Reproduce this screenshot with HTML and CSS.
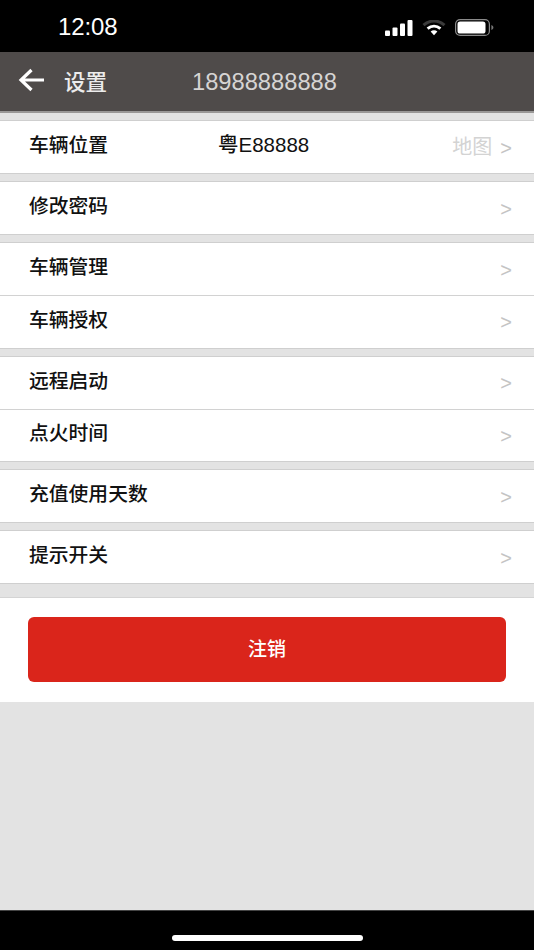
FILE: index.html
```html
<!DOCTYPE html>
<html lang="zh-CN">
<head>
<meta charset="utf-8">
<title>设置</title>
<link rel="stylesheet" href="styles.css">
</head>
<body>
<div class="screen">
  <div class="status">
    <span class="time">12:08</span>
    <div class="status-icons">
      <svg class="signal" width="28" height="16" viewBox="0 0 28 16"><rect x="0" y="10.500" width="5" height="5.500" rx="1"/><rect x="7.500" y="7.500" width="5" height="8.500" rx="1"/><rect x="15" y="3.500" width="5" height="12.500" rx="1"/><rect x="22.500" y="0" width="5" height="16" rx="1"/></svg>
      <svg class="wifi" width="24" height="16" viewBox="0 0 24 16"><path d="M1.500 5.200C7.600-.4 16.400-.4 22.500 5.200" fill="none" stroke="#3a3a3a" stroke-width="3"/><path d="M5.600 8.600C9.400 5.400 14.600 5.400 18.400 8.600" fill="none" stroke="#fff" stroke-width="3"/><path d="M8.600 11.400C10.600 9.900 13.400 9.900 15.400 11.400L12 15.200Z" fill="#fff"/></svg>
      <svg class="battery" width="39" height="17" viewBox="0 0 39 17"><rect x=".6" y=".6" width="33.800" height="15.800" rx="4.500" fill="none" stroke="#8a8a8a" stroke-width="1.200"/><rect x="2.500" y="2.500" width="28" height="12" rx="2.600" fill="#fff"/><path d="M36.400 6v5c1.200-.4 2-1.400 2-2.500s-.8-2.100-2-2.500Z" fill="#777"/></svg>
    </div>
  </div>
  <header class="topbar">
    <svg class="back" width="28" height="24" viewBox="0 0 28 24"><path d="M26 12H3M13.500 2 3 12l10.500 10" fill="none" stroke="#fff" stroke-width="3.200"/></svg>
    <span class="title">设置</span>
    <span class="phone">18988888888</span>
  </header>
  <main class="content">
    <section class="group">
      <div class="row">
        <span class="label">车辆位置</span>
        <span class="plate">粤E88888</span>
        <span class="map">地图</span>
        <span class="chev">&gt;</span>
      </div>
    </section>
    <section class="group">
      <div class="row"><span class="label">修改密码</span><span class="chev">&gt;</span></div>
    </section>
    <section class="group">
      <div class="row"><span class="label">车辆管理</span><span class="chev">&gt;</span></div>
      <div class="row"><span class="label">车辆授权</span><span class="chev">&gt;</span></div>
    </section>
    <section class="group">
      <div class="row"><span class="label">远程启动</span><span class="chev">&gt;</span></div>
      <div class="row"><span class="label">点火时间</span><span class="chev">&gt;</span></div>
    </section>
    <section class="group">
      <div class="row"><span class="label">充值使用天数</span><span class="chev">&gt;</span></div>
    </section>
    <section class="group">
      <div class="row"><span class="label">提示开关</span><span class="chev">&gt;</span></div>
    </section>
    <div class="logout-panel">
      <button class="logout">注销</button>
    </div>
  </main>
  <div class="home-area"><div class="home-bar"></div></div>
</div>
</body>
</html>
```
FILE: styles.css
```css
* { box-sizing: border-box; }
html, body { margin: 0; padding: 0; background: #000; }
body { font-family: "Liberation Sans", "Noto Sans CJK SC", sans-serif; }
.screen { width: 534px; height: 950px; display: flex; flex-direction: column; overflow: hidden; background: #000; }
.status { height: 52px; flex: none; display: flex; align-items: center; justify-content: space-between; padding: 2px 40px 0 58px; color: #fff; }
.time { font-size: 24px; letter-spacing: -.1px; }
.status-icons { display: flex; align-items: center; gap: 9px; padding-top: 1px; }
.signal { fill: #fff; }
.topbar { height: 61px; flex: none; background: #4f4b4a; border-bottom: 2px solid #9a9897; display: flex; align-items: center; padding: 0 0 3px 18px; }
.back { flex: none; }
.title { margin-left: 18px; font-size: 21.500px; font-weight: 500; color: #ececec; font-family: "Noto Sans CJK SC", sans-serif; width: 128px; }
.phone { font-size: 23.700px; color: #d6d4d3; padding-top: 4px; }
.content { flex: 1; background: #e3e3e3; padding-top: 7px; }
.group { background: #fff; border-top: 1px solid #cfcfcf; border-bottom: 1px solid #cfcfcf; margin-bottom: 7px; }
.row { height: 52px; display: flex; align-items: center; padding: 0 22px 0 29px; color: #111; }
.row + .row { height: 52.500px; border-top: 1px solid #d2d2d2; }
.label { font-family: "Noto Sans CJK SC", sans-serif; font-size: 19.800px; font-weight: 500; padding-bottom: 7px; flex: 1; }
.plate { position: absolute; left: 218px; font-size: 20.500px; font-weight: 500; padding-bottom: 8px; }
.map { font-family: "Noto Sans CJK SC", sans-serif; font-size: 20px; color: #d3d3d3; margin-right: 8px; padding-bottom: 4px; }
.chev { font-size: 20px; color: #c4c4c4; line-height: 1; padding-top: 1px; }
.logout-panel { margin-top: 13px; height: 105px; background: #fff; padding: 19px 28px; border-top: 1px solid #d4d4d4; }
.logout { display: block; width: 100%; height: 65px; border: none; border-radius: 6px; background: #da251b; color: #fff; font-family: "Noto Sans CJK SC", sans-serif; font-size: 19px; font-weight: 500; padding: 0 0 4px; }
.home-area { height: 40px; flex: none; background: #000; padding-top: 24px; border-top: 1px solid #444; }
.home-bar { width: 191px; height: 6px; margin: 0 auto; border-radius: 3px; background: #fff; }
```
